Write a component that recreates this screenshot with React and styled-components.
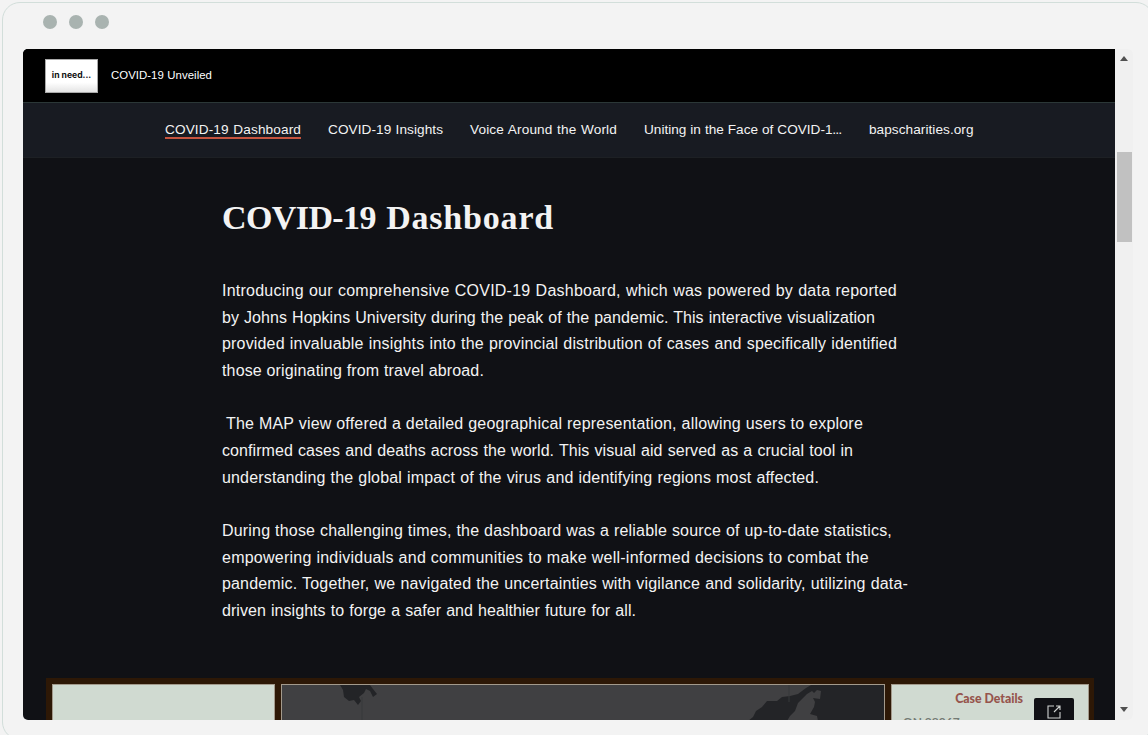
import React from 'react';
import styled, { createGlobalStyle } from 'styled-components';

const Global = createGlobalStyle`
  * { box-sizing: border-box; }
  html, body { margin: 0; height: 735px; overflow: hidden; background: #f3f3f3; }
`;
const Stage = styled.div`
  width: 1148px; height: 735px; padding: 2px 0 0 2px; overflow: hidden;
  font-family: "Liberation Sans", Arial, sans-serif; color: #fff;
`;
const Frame = styled.div`
  width: 1152px; height: 738px; border: 1px solid #d2deda; border-radius: 18px;
  background: #f3f3f3; padding: 0 0 0 20px;
`;
const Dots = styled.div`
  height: 46px; display: flex; gap: 12px; padding: 12px 0 0 20px;
`;
const Dot = styled.i`
  width: 14px; height: 14px; border-radius: 50%; background: #a9b3b0;
`;
const Viewport = styled.div`
  display: flex; width: 1110px; height: 671px;
`;
const Page = styled.main`
  width: 1092px; height: 671px; overflow: hidden; display: flex; flex-direction: column;
  background: #101115; border-radius: 5px 0 0 5px;
`;
const Header = styled.header`
  height: 54px; flex: none; background: #000; border-bottom: 1px solid #2b3737;
  display: flex; align-items: center; padding-left: 22px; gap: 13px;
`;
const Logo = styled.div`
  width: 53px; height: 34px; border: 1px solid #aaa; background: linear-gradient(#fff 70%, #e4e4e4);
  color: #111; font: 700 8.6px/31px Inter, sans-serif; text-align: center; white-space: nowrap;
`;
const Brand = styled.span`
  font-size: 11.4px; width: 101px; white-space: nowrap; text-align-last: justify;
  letter-spacing: 0.04px; padding-bottom: 2px;
`;
const Nav = styled.nav`
  height: 55px; flex: none; background: #181b22; border-bottom: 1px solid #1d2024;
  display: flex; align-items: flex-start; gap: 27px; padding: 18px 0 0 142px;
`;
const NavItem = styled.a`
  flex: none; width: ${p => p.$w}px; height: 18px; font-size: 13.6px; line-height: 17px;
  white-space: nowrap; text-align-last: justify; color: #f3f3f3; letter-spacing: ${p => p.$ls}px;
  border-bottom: ${p => (p.$active ? '2px solid #c6543f' : '0')};
`;
const Ellipsis = styled.span`
  font-size: 9.5px; font-weight: 700; letter-spacing: 0;
`;
const Article = styled.article`
  height: 520px; flex: none; padding: 36px 0 0 199px;
`;
const Title = styled.h1`
  margin: 0; height: 48px; font: 700 34px/48px "Liberation Serif", serif; color: #f3f3f3;
  width: 332px; white-space: nowrap; text-align-last: justify;
`;
const Word = styled.span`
  letter-spacing: ${p => p.$ls}px;
`;
const Copy = styled.div`
  margin-top: 36px;
`;
const Paragraph = styled.p`
  margin: 0 0 26.67px; font-size: 16px; line-height: 26.67px; color: #f3f3f3;
`;
const Line = styled.span`
  display: block; width: ${p => p.$w}px; padding-left: ${p => p.$indent || 0}px;
  letter-spacing: ${p => p.$ls}px; white-space: nowrap; text-align-last: justify;
`;
const Embed = styled.section`
  width: 1048px; height: 42px; margin-left: 23px; background: #2d1806; flex: none;
  display: flex; gap: 6px; padding: 6px 6px 0 6px;
`;
const Panel = styled.div`
  flex: none; width: ${p => p.$w}px; height: 40px; border: 1px solid #a39a8c; background: #d0dad1;
  overflow: hidden;
`;
const Details = styled.div`
  display: flex; justify-content: space-between; color: #96544c; padding-left: 11px;
`;
const Texts = styled.div`
  font: 900 12.3px/15px Lato, sans-serif; padding-top: 6px; width: 120px;
`;
const CaseTitle = styled.div`
  text-align: right;
`;
const CaseId = styled.div`
  color: #747b75; margin-top: 8px; font-size: 12px; font-weight: 700;
`;
const OpenButton = styled.div`
  width: 40px; height: 40px; margin: 13px 14px 0 0; background: #101115; border-radius: 2px 2px 0 0;
  display: flex; justify-content: center; padding-top: 7px;
`;
const Scroll = styled.aside`
  width: 18px; background: #f0f0f0; border-radius: 0 6px 6px 0; display: flex; flex-direction: column;
  padding: 7px 0 8px 2px;
`;
const Thumb = styled.div`
  width: 15px; height: 90px; background: #c1c1c1; margin-top: 91px;
`;
const Arrow = styled.i`
  width: 0; height: 0; margin: ${p => (p.$down ? 'auto 0 0 3px' : '0 0 0 3px')};
  border: 4px solid transparent;
  border-${p => (p.$down ? 'top' : 'bottom')}: 5px solid #505050;
  border-${p => (p.$down ? 'bottom' : 'top')}-width: 0;
`;

const nav = [
  ['COVID-19 Dashboard', 136, 0.13], ['COVID-19 Insights', 115, 0.07],
  ['Voice Around the World', 147, 0.15],
  ['Uniting in the Face of COVID-1', 198, 0, true], ['bapscharities.org', 105, 0.06],
];
const paragraphs = [
  [
    ['Introducing our comprehensive COVID-19 Dashboard, which was powered by data reported', 675, 0.24],
    ['by Johns Hopkins University during the peak of the pandemic. This interactive visualization', 653, 0.05],
    ['provided invaluable insights into the provincial distribution of cases and specifically identified', 675, 0.17],
    ['those originating from travel abroad.', 262, 0.15],
  ],
  [
    ['The MAP view offered a detailed geographical representation, allowing users to explore', 641, 0.2, 4],
    ['confirmed cases and deaths across the world. This visual aid served as a crucial tool in', 631, 0.07],
    ['understanding the global impact of the virus and identifying regions most affected.', 597, 0.16],
  ],
  [
    ['During those challenging times, the dashboard was a reliable source of up-to-date statistics,', 670, 0.19],
    ['empowering individuals and communities to make well-informed decisions to combat the', 647, 0.24],
    ['pandemic. Together, we navigated the uncertainties with vigilance and solidarity, utilizing data-', 686, 0.16],
    ['driven insights to forge a safer and healthier future for all.', 414, 0.05],
  ],
];

export default function App() {
  return (
    <Stage>
      <Global />
      <Frame>
        <Dots><Dot /><Dot /><Dot /></Dots>
        <Viewport>
          <Page>
            <Header><Logo>in need...</Logo><Brand>COVID-19 Unveiled</Brand></Header>
            <Nav>
              {nav.map(([t, w, ls, cut], i) => (
                <NavItem key={t} $w={w} $ls={ls} $active={i === 0}>{t}{cut && <Ellipsis>…</Ellipsis>}</NavItem>
              ))}
            </Nav>
            <Article>
              <Title><Word $ls={-0.6}>COVID-19</Word> <Word $ls={0.8}>Dashboard</Word></Title>
              <Copy>
                {paragraphs.map((lines, i) => (
                  <Paragraph key={i}>
                    {lines.map(([t, w, ls, indent]) => <Line key={t} $w={w} $ls={ls} $indent={indent}>{t}</Line>)}
                  </Paragraph>
                ))}
              </Copy>
            </Article>
            <Embed>
              <Panel $w={223} />
              <Panel $w={604}>
                <svg width="602" height="36" viewBox="0 0 602 36">
                  <rect width="602" height="36" fill="#404042" />
                  <path d="M58 0L61 5L62 12L67 16L72 15L76 20L79 16L77 12L82 8L84 4L88 6L91 12L95 9L91 4L88 0Z" fill="#232427" />
                  <path d="M529 0L524 3L516 9L508 11L500 12L495 16L485 16L480 22L474 26L471 32L466 36H602V0Z" fill="#232427" />
                  <path d="M530 6L525 9L516 18L513 26L508 31L505 36H536L535 31L528 29L532 22L533 17L531 13L538 14L539 6L535 5L532 8Z" fill="#404042" />
                  <path d="M80 12V36M507 0V17" stroke="#37383a" fill="none" />
                </svg>
              </Panel>
              <Panel $w={198}>
                <Details>
                  <Texts><CaseTitle>Case Details</CaseTitle><CaseId>ON 98067</CaseId></Texts>
                  <OpenButton>
                    <svg width="14" height="14" viewBox="0 0 14 14" fill="none" stroke="#d0d4d2" strokeWidth="1.1">
                      <path d="M7 1H1v12h12V7M9 1h4v4M13 1L7 7" />
                    </svg>
                  </OpenButton>
                </Details>
              </Panel>
            </Embed>
          </Page>
          <Scroll><Arrow /><Thumb /><Arrow $down /></Scroll>
        </Viewport>
      </Frame>
    </Stage>
  );
}
